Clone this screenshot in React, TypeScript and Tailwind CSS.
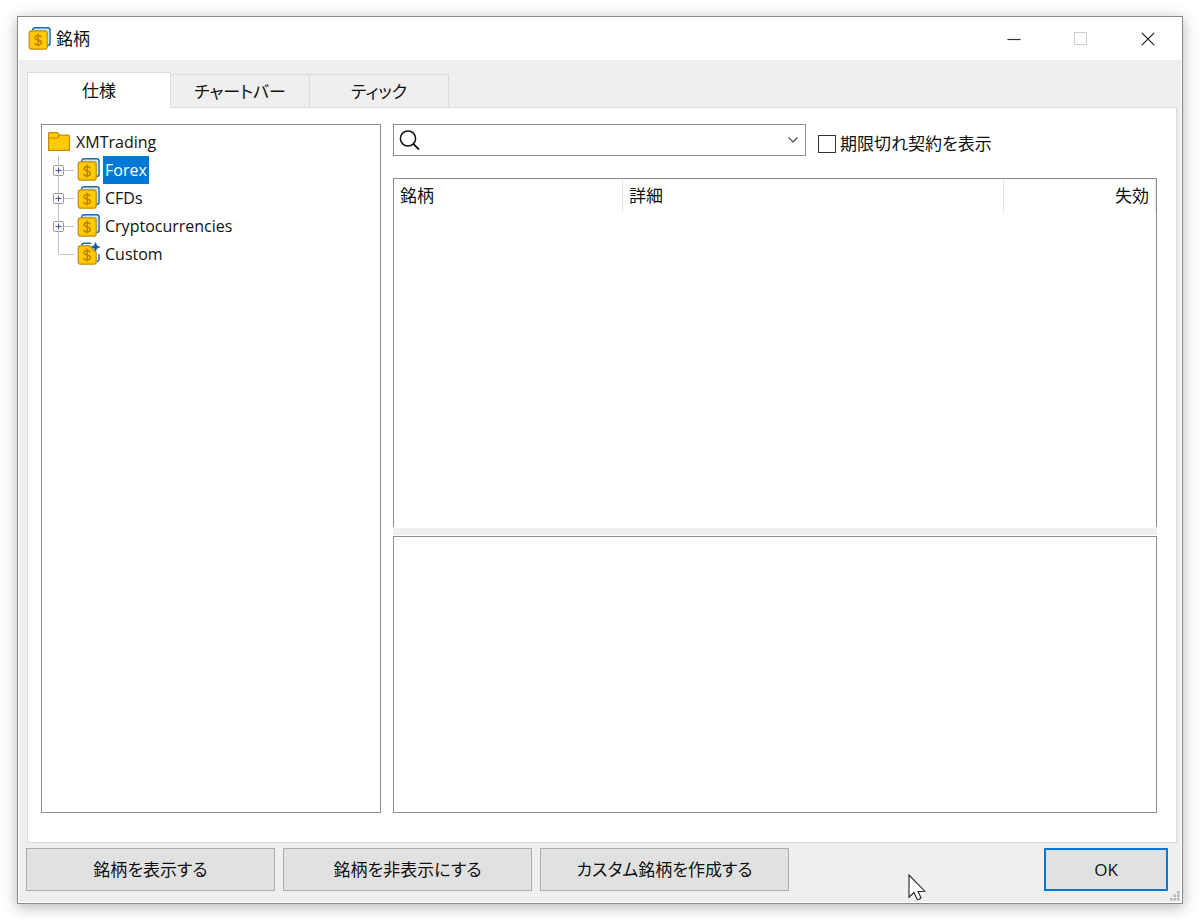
import { useState } from 'react'

const SYMBOL_GROUPS = [
  { id: 'forex', name: 'Forex', expandable: true },
  { id: 'cfds', name: 'CFDs', expandable: true },
  { id: 'crypto', name: 'Cryptocurrencies', expandable: true },
  { id: 'custom', name: 'Custom', expandable: false },
]

const TABS = ['仕様', 'チャートバー', 'ティック']

const ACTIONS = ['銘柄を表示する', '銘柄を非表示にする', 'カスタム銘柄を作成する']

function SymbolIcon({ custom = false }: { custom?: boolean }) {
  return (
    <svg width="24" height="24" viewBox="0 0 24 24" fill="none" className="shrink-0" aria-hidden="true">
      {custom ? (
        <>
          <path d="M4.5 3.5 Q5 1.2 7 1.2 H14" stroke="#1c6ea4" strokeWidth="1.4" />
          <path d="M22 12 V17 Q22 19.2 20 19.5" stroke="#1c6ea4" strokeWidth="1.4" />
          <path d="M18.5 0.5 L19.8 3.7 L23 5 L19.8 6.3 L18.5 9.5 L17.2 6.3 L14 5 L17.2 3.7 Z" fill="#0b5c9c" stroke="#0b5c9c" strokeWidth="0.6" />
          <path d="M3.5 3.8 H13 L15.5 7.5 L19.2 10 V20 Q19.2 22.2 17 22.2 H3.5 Q1.2 22.2 1.2 20 V6 Q1.2 3.8 3.5 3.8 Z" fill="#ffcc00" stroke="#c68a10" strokeWidth="1.2" />
        </>
      ) : (
        <>
          <rect x="4.5" y="0.8" width="17.6" height="17.8" rx="2.5" fill="#c9e6f2" stroke="#1c6ea4" strokeWidth="1.4" />
          <rect x="1.2" y="3.8" width="18" height="18.4" rx="2.5" fill="#ffcc00" stroke="#c68a10" strokeWidth="1.2" />
        </>
      )}
      <path d="M13.2 10.2 C12.8 8.9 11.6 8.4 10.2 8.4 C8.5 8.4 7.1 9.2 7.1 10.7 C7.1 12.3 8.6 12.7 10.2 13.1 C11.9 13.5 13.4 14 13.4 15.6 C13.4 17.1 12 17.9 10.2 17.9 C8.5 17.9 7.2 17.2 6.9 15.8 M10.2 6.6 V19.6" stroke="#c07f08" strokeWidth="1.5" />
    </svg>
  )
}

function FolderIcon() {
  return (
    <svg width="24" height="22" viewBox="0 0 24 22" fill="none" className="shrink-0" aria-hidden="true">
      <path d="M1.6 19.4 V2.6 Q1.6 1.6 2.6 1.6 H10.5 L12.5 4.2 H21.4 Q22.4 4.2 22.4 5.2 V19.4 Z" fill="#ffcc00" stroke="#c68a10" strokeWidth="1.2" />
      <path d="M1.6 7 H10.5 L12.5 4.2" stroke="#c68a10" strokeWidth="1.2" />
    </svg>
  )
}

function Titlebar() {
  return (
    <header className="flex h-[43px] items-center bg-white pl-[9px]">
      <SymbolIcon />
      <h1 className="ml-1 flex-1">銘柄</h1>
      <div className="flex h-full">
        <button aria-label="Minimize" className="flex w-[67px] items-center justify-center">
          <svg width="14" height="14" viewBox="0 0 14 14" stroke="#333" strokeWidth="1.2"><path d="M0.5 7.5 H13.5" /></svg>
        </button>
        <button aria-label="Maximize" disabled className="flex w-[67px] items-center justify-center">
          <svg width="14" height="14" viewBox="0 0 14 14" fill="none" stroke="#cfcfcf"><rect x="0.5" y="0.5" width="12" height="12" /></svg>
        </button>
        <button aria-label="Close" className="flex w-[67px] items-center justify-center">
          <svg width="14" height="14" viewBox="0 0 14 14" stroke="#222" strokeWidth="1.2"><path d="M0.8 0.8 L13.2 13.2 M13.2 0.8 L0.8 13.2" /></svg>
        </button>
      </div>
    </header>
  )
}

function SymbolTree() {
  const [selected, setSelected] = useState('forex')
  return (
    <nav className="border border-[#8b8d95] bg-white pt-[3px] pl-[5px] text-base leading-6">
      <div className="flex h-7 items-center">
        <FolderIcon />
        <span className="ml-[5px]">XMTrading</span>
      </div>
      <ul>
        {SYMBOL_GROUPS.map(({ id, name, expandable }) => (
          <li key={id} className="flex h-7 items-center">
            <svg width="30" height="28" viewBox="0 0 30 28" fill="none" className="shrink-0" aria-hidden="true">
              <path d={expandable ? 'M11.5 0 V28 M11.5 14.5 H27' : 'M11.5 0 V14.5 H27'} stroke="#c2c2c2" />
              {expandable && (
                <>
                  <rect x="6.5" y="9.5" width="10" height="10" rx="1" fill="#fafafa" stroke="#999" />
                  <path d="M8.5 14.5 H14.5 M11.5 11.5 V17.5" stroke="#43549c" />
                </>
              )}
            </svg>
            <SymbolIcon custom={!expandable} />
            <button
              onClick={() => setSelected(id)}
              className={'ml-0.5 h-7 px-0.5 ' + (selected === id ? 'bg-[#0078d7] text-white' : '')}
            >
              {name}
            </button>
          </li>
        ))}
      </ul>
    </nav>
  )
}

function SearchRow() {
  const [showExpired, setShowExpired] = useState(false)
  return (
    <div className="flex h-8 items-center">
      <div className="flex h-8 w-[413px] items-center border border-[#8b8d95] bg-white">
        <svg width="22" height="22" viewBox="0 0 22 22" fill="none" stroke="#111" strokeWidth="1.5" className="ml-1 shrink-0" aria-hidden="true">
          <circle cx="10" cy="9.5" r="7.6" />
          <path d="M15.3 14.9 L21 20.5" strokeWidth="1.8" />
        </svg>
        <input type="text" aria-label="Search" className="h-full min-w-0 flex-1 px-2 outline-none" />
        <button aria-label="Open list" className="flex h-full w-6 items-center justify-center">
          <svg width="12" height="8" viewBox="0 0 12 8" fill="none" stroke="#444" strokeWidth="1.1"><path d="M1.5 1.5 L6 6 L10.5 1.5" /></svg>
        </button>
      </div>
      <label className="ml-3 flex items-center pt-2">
        <input
          type="checkbox"
          checked={showExpired}
          onChange={(e) => setShowExpired(e.target.checked)}
          className="mr-1 size-[18px] appearance-none border border-[#333] bg-white checked:bg-[#0078d7]"
        />
        期限切れ契約を表示
      </label>
    </div>
  )
}

function SymbolTable() {
  return (
    <div className="mt-[22px] flex-1 border border-b-0 border-[#8b8d95] bg-white pt-px">
      <table className="w-full table-fixed border-collapse">
        <thead>
          <tr className="h-8">
            <th className="w-[30%] border-r border-[#e5e5e5] px-1.5 text-left font-normal">銘柄</th>
            <th className="w-[50%] border-r border-[#e5e5e5] px-1.5 text-left font-normal">詳細</th>
            <th className="border-r border-[#e5e5e5] px-1.5 text-right font-normal">失効</th>
          </tr>
        </thead>
        <tbody></tbody>
      </table>
    </div>
  )
}

function Footer() {
  return (
    <footer className="relative flex gap-2 pt-[5px] pr-[13px] pb-[11px] pl-[7px]">
      {ACTIONS.map((label) => (
        <button key={label} className="h-[43px] w-[249px] border border-[#adadad] bg-[#e1e1e1]">{label}</button>
      ))}
      <button className="ml-auto h-[43px] w-[124px] border-2 border-[#0078d7] bg-[#e1e1e1]">OK</button>
      {/* mouse pointer */}
      <svg width="18" height="28" viewBox="0 0 18 28" className="absolute top-[31px] left-[889px]" aria-hidden="true">
        <path d="M1 1 V23.2 L6 18.5 L9.2 25.4 Q11.5 26 13 23.8 L10 17.5 L16.8 17.2 Z" fill="#fff" stroke="#222" strokeWidth="1.1" />
      </svg>
      {/* resize grip */}
      <svg width="10" height="10" viewBox="0 0 10 10" fill="#b3b3b3" className="absolute right-px bottom-px" aria-hidden="true">
        <path d="M7 0h2.4v2.4h-2.4z M7 3.5h2.4v2.4h-2.4z M3.5 3.5h2.4v2.4h-2.4z M7 7h2.4v2.4h-2.4z M3.5 7h2.4v2.4h-2.4z M0 7h2.4v2.4h-2.4z" />
      </svg>
    </footer>
  )
}

export default function App() {
  const [tab, setTab] = useState(0)
  return (
    <div className="flex min-h-screen flex-col bg-white px-[17px] py-4 font-['Open_Sans','Noto_Sans_CJK_JP',sans-serif] text-[17px] leading-6 text-[#111] [font-feature-settings:'palt']">
      <div className="flex flex-1 flex-col border border-[#8a8a8a] bg-white px-px pb-px shadow-[0_3px_14px_rgba(0,0,0,0.3)]">
        <Titlebar />
        <div className="flex flex-1 flex-col bg-[#efefef] pt-3">
          <div role="tablist" className="flex h-[35px] items-end pl-2">
            {TABS.map((label, i) => (
              <button
                key={label}
                role="tab"
                aria-selected={tab === i}
                onClick={() => setTab(i)}
                className={tab === i
                  ? 'relative z-10 -mb-px h-9 w-[144px] border border-b-0 border-[#dcdcdc] bg-white'
                  : 'h-[33px] w-[139px] border-t border-r border-[#dcdcdc] pt-0.5'}
              >
                {label}
              </button>
            ))}
          </div>
          <main className="mr-1 ml-2 flex flex-1 border border-[#dcdcdc] bg-white pt-4 pr-[19px] pb-[29px] pl-[13px]">
            <div className="grid flex-1 grid-cols-[340px_1fr] gap-3">
              <SymbolTree />
              <div className="flex flex-col">
                <SearchRow />
                <SymbolTable />
                <div className="my-px h-[7px] bg-[#efefef]"></div>
                <div className="h-[277px] border border-[#8b8d95] bg-white"></div>
              </div>
            </div>
          </main>
          <Footer />
        </div>
      </div>
    </div>
  )
}
